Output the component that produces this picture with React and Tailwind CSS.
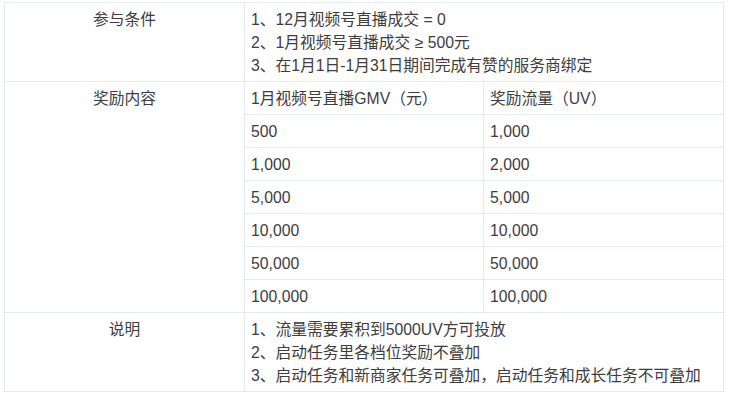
export default function App() {
  const font = { fontFamily: '"Liberation Sans", "Noto Sans CJK SC", sans-serif' };
  const td = "border border-[#e3eaf3] px-[6px] pt-[5px] pb-[4px] align-top leading-[23px]";
  const rows = [
    ["500", "1,000"],
    ["1,000", "2,000"],
    ["5,000", "5,000"],
    ["10,000", "10,000"],
    ["50,000", "50,000"],
    ["100,000", "100,000"],
  ];
  return (
    <div className="w-[730px] h-[396px] bg-white pt-[2px] pl-[4px]" style={font}>
      <table className="table-fixed border-collapse w-[720px] text-[15.75px] text-[#3d3d3d]">
        <colgroup>
          <col className="w-[240px]" />
          <col className="w-[239px]" />
          <col className="w-[240px]" />
        </colgroup>
        <tbody>
          <tr>
            <td className={td + " text-center"}>参与条件</td>
            <td className={td} colSpan={2}>
              <div>1、12月视频号直播成交 = 0</div>
              <div>2、1月视频号直播成交 ≥ 500元</div>
              <div>3、在1月1日-1月31日期间完成有赞的服务商绑定</div>
            </td>
          </tr>
          <tr>
            <td className={td + " text-center"} rowSpan={7}>奖励内容</td>
            <td className={td}>1月视频号直播GMV（元）</td>
            <td className={td}>奖励流量（UV）</td>
          </tr>
          {rows.map(([a, b], i) => (
            <tr key={i}>
              <td className={td}>{a}</td>
              <td className={td}>{b}</td>
            </tr>
          ))}
          <tr>
            <td className={td + " text-center"}>说明</td>
            <td className={td} colSpan={2}>
              <div>1、流量需要累积到5000UV方可投放</div>
              <div>2、启动任务里各档位奖励不叠加</div>
              <div>3、启动任务和新商家任务可叠加，启动任务和成长任务不可叠加</div>
            </td>
          </tr>
        </tbody>
      </table>
    </div>
  );
}
